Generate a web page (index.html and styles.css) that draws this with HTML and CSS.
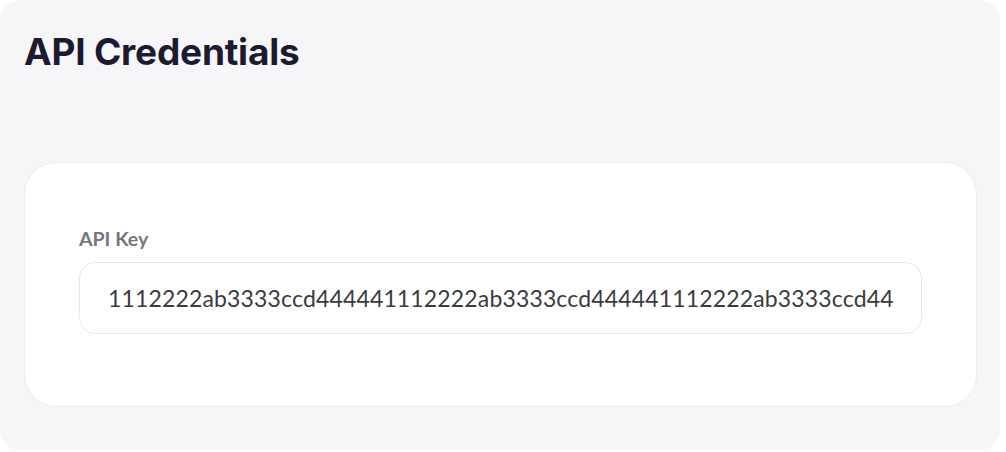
FILE: index.html
```html
<!doctype html>
<html lang="en">
<head>
	<meta charset="UTF-8">
	<title>API Credentials</title>
	<link rel="stylesheet" href="styles.css">
</head>
<body>
	<div class="panel">
		<h1 class="panel-title">API Credentials</h1>
		<div class="card">
			<label class="field-label" for="api-key">API Key</label>
			<div class="field-box" id="api-key">1112222ab3333ccd444441112222ab3333ccd444441112222ab3333ccd44</div>
		</div>
	</div>
</body>
</html>
```

FILE: styles.css
```css
*{
	margin: 0;
	padding: 0;
	box-sizing: border-box;
}
body{
	background: #fff;
	width: 1006px;
	height: 452px;
}
.panel{
	width: 1000px;
	height: 450px;
	background: #f6f6f8;
	border-radius: 20px;
	padding: 29px 24px 0 24px;
}
.panel-title{
	font-family: Inter, "Liberation Sans", sans-serif;
	font-weight: 700;
	font-size: 37px;
	line-height: 45px;
	color: #1b1a30;
	letter-spacing: -0.2px;
	margin-bottom: 88px;
}
.card{
	background: #fff;
	border: 1px solid #ececf0;
	border-radius: 32px;
	height: 245px;
	width: 953px;
	padding: 64px 54px 0 54px;
}
.field-label{
	display: block;
	font-family: Lato, "Open Sans", sans-serif;
	font-weight: 700;
	font-size: 19.5px;
	line-height: 24px;
	color: #76757f;
	margin-bottom: 11px;
}
.field-box{
	height: 72px;
	border: 1px solid #e9e9ed;
	border-radius: 16px;
	padding: 0 28px;
	font-family: Lato, "Open Sans", sans-serif;
	font-size: 23px;
	letter-spacing: 0.15px;
	color: #3b3b3f;
	display: flex;
	align-items: center;
	white-space: nowrap;
	overflow: hidden;
}
```
